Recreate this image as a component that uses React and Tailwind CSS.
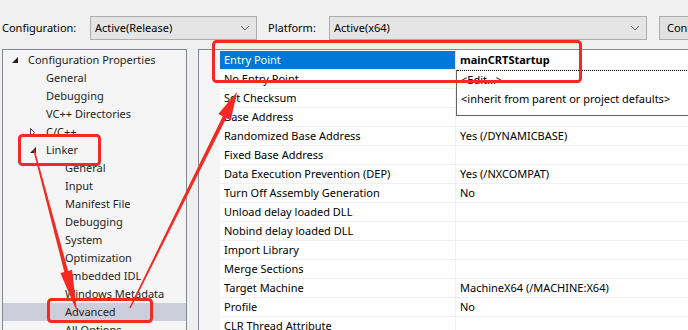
const font = { fontFamily: '"Segoe UI", "Noto Sans", sans-serif' }

const tree = [
  { label: 'Configuration Properties', level: 0, arrow: 'open' },
  { label: 'General', level: 1 },
  { label: 'Debugging', level: 1 },
  { label: 'VC++ Directories', level: 1 },
  { label: 'C/C++', level: 1, arrow: 'closed' },
  { label: 'Linker', level: 1, arrow: 'open' },
  { label: 'General', level: 2 },
  { label: 'Input', level: 2 },
  { label: 'Manifest File', level: 2 },
  { label: 'Debugging', level: 2 },
  { label: 'System', level: 2 },
  { label: 'Optimization', level: 2 },
  { label: 'Embedded IDL', level: 2 },
  { label: 'Windows Metadata', level: 2 },
  { label: 'Advanced', level: 2, selected: true },
  { label: 'All Options', level: 2 },
]

const props = [
  ['Entry Point', 'mainCRTStartup'],
  ['No Entry Point', ''],
  ['Set Checksum', ''],
  ['Base Address', ''],
  ['Randomized Base Address', 'Yes (/DYNAMICBASE)'],
  ['Fixed Base Address', ''],
  ['Data Execution Prevention (DEP)', 'Yes (/NXCOMPAT)'],
  ['Turn Off Assembly Generation', 'No'],
  ['Unload delay loaded DLL', ''],
  ['Nobind delay loaded DLL', ''],
  ['Import Library', ''],
  ['Merge Sections', ''],
  ['Target Machine', 'MachineX64 (/MACHINE:X64)'],
  ['Profile', 'No'],
  ['CLR Thread Attribute', ''],
]

const indent = ['pl-[9px]', 'pl-[27px]', 'pl-[46px]']

function Chevron() {
  return (
    <svg width="10" height="6" viewBox="0 0 10 6" className="shrink-0">
      <polyline points="1,1 5,5 9,1" fill="none" stroke="#606060" strokeWidth="1" />
    </svg>
  )
}

function Select({ value, className }) {
  return (
    <div className={`flex h-[24px] shrink-0 items-center justify-between border border-[#adadad] bg-[#e5e5e5] pl-[4px] pr-[6px] ${className}`}>
      <span>{value}</span>
      <Chevron />
    </div>
  )
}

function TreeArrow({ type }) {
  if (type === 'open')
    return (
      <svg width="6" height="6" viewBox="0 0 6 6">
        <polygon points="6,0 6,6 0,6" fill="#1e1e1e" />
      </svg>
    )
  if (type === 'closed')
    return (
      <svg width="5" height="9" viewBox="0 0 5 9">
        <polygon points="0.5,0.5 4.5,4.5 0.5,8.5" fill="none" stroke="#404040" strokeWidth="1" />
      </svg>
    )
  return null
}

function arrow(sx, sy, tx, ty, L, W, w0, w1) {
  const dx = tx - sx
  const dy = ty - sy
  const len = Math.hypot(dx, dy)
  const ux = dx / len
  const uy = dy / len
  const nx = -uy
  const ny = ux
  const bx = tx - ux * L
  const by = ty - uy * L
  const p = [
    [sx + (nx * w0) / 2, sy + (ny * w0) / 2],
    [bx + (nx * w1) / 2, by + (ny * w1) / 2],
    [bx + nx * W, by + ny * W],
    [tx, ty],
    [bx - nx * W, by - ny * W],
    [bx - (nx * w1) / 2, by - (ny * w1) / 2],
    [sx - (nx * w0) / 2, sy - (ny * w0) / 2],
  ]
  return p.map((q) => q.join(',')).join(' ')
}

export default function App() {
  return (
    <div className="relative h-[330px] w-[688px] overflow-hidden bg-[#f0f0f0] text-[11px] text-black" style={font}>
      {/* toolbar */}
      <div className="flex h-[49px] items-start pl-[2px] pt-[16px]">
        <div className="flex h-[24px] w-[88px] shrink-0 items-center">Configuration:</div>
        <Select value="Active(Release)" className="w-[167px]" />
        <div className="ml-[11px] flex h-[24px] w-[61px] shrink-0 items-center">Platform:</div>
        <Select value="Active(x64)" className="w-[318px]" />
        <div className="ml-[12px] flex h-[24px] w-[140px] shrink-0 items-center overflow-hidden whitespace-nowrap border border-[#adadad] bg-[#e1e1e1] pl-[7px]">
          Configuration Manager...
        </div>
      </div>

      {/* body */}
      <div className="flex h-[281px]">
        <div className="ml-[2px] w-[185px] shrink-0 overflow-hidden border border-b-0 border-[#828790] bg-[#f5f5f5] pt-[1px] text-[#1e1e1e]">
          {tree.map((t, i) => (
            <div key={i} className={`flex h-[18px] items-center ${indent[t.level]} ${t.selected ? 'bg-[#cccedb]' : ''}`}>
              <span className="flex w-[16px] shrink-0 items-center">{t.arrow && <TreeArrow type={t.arrow} />}</span>
              <span className="whitespace-nowrap">{t.label}</span>
            </div>
          ))}
        </div>

        <div className="relative ml-[11px] flex-1 overflow-hidden border-l border-t border-[#828790] bg-white pt-[1px]">
          <div className="absolute inset-y-0 left-0 w-[21px] bg-[#f5f5f5]" />
          {props.map(([name, value], i) => (
            <div key={i} className="flex h-[19px] border-b border-[#eef0f4] pl-[21px]">
              <div
                className={`flex w-[236px] items-center border-r border-[#eef0f4] pl-[4px] ${i === 0 ? 'bg-[#0078d7] text-white' : ''}`}
              >
                {name}
              </div>
              <div className={`flex flex-1 items-center whitespace-nowrap pl-[4px] ${i === 0 ? 'font-bold' : ''}`}>{value}</div>
            </div>
          ))}

          {/* dropdown popup */}
          <div className="absolute left-[257px] top-[20px] h-[46px] w-[240px] border border-t-0 border-[#646464] bg-white">
            <div className="border-t border-dotted border-black" />
            <div className="flex h-[18px] items-center pl-[4px]">&lt;Edit...&gt;</div>
            <div className="flex h-[20px] items-center pl-[4px]">&lt;inherit from parent or project defaults&gt;</div>
          </div>
        </div>
      </div>

      {/* annotations */}
      <svg className="pointer-events-none absolute inset-0" width="688" height="330" viewBox="0 0 688 330">
        <g fill="none" stroke="#f22a22" strokeWidth="3">
          <rect x="213.5" y="41.5" width="367" height="40" rx="3" />
          <rect x="19.5" y="135.5" width="80" height="29" rx="3" />
          <rect x="48.5" y="299.5" width="103" height="22" rx="3" />
        </g>
        <g fill="#f22a22">
          <polygon points={arrow(34, 150, 77, 312, 42, 6, 1.5, 4)} />
          <polygon points={arrow(130, 308, 237, 92, 28, 7, 1.5, 4)} />
        </g>
      </svg>
    </div>
  )
}
